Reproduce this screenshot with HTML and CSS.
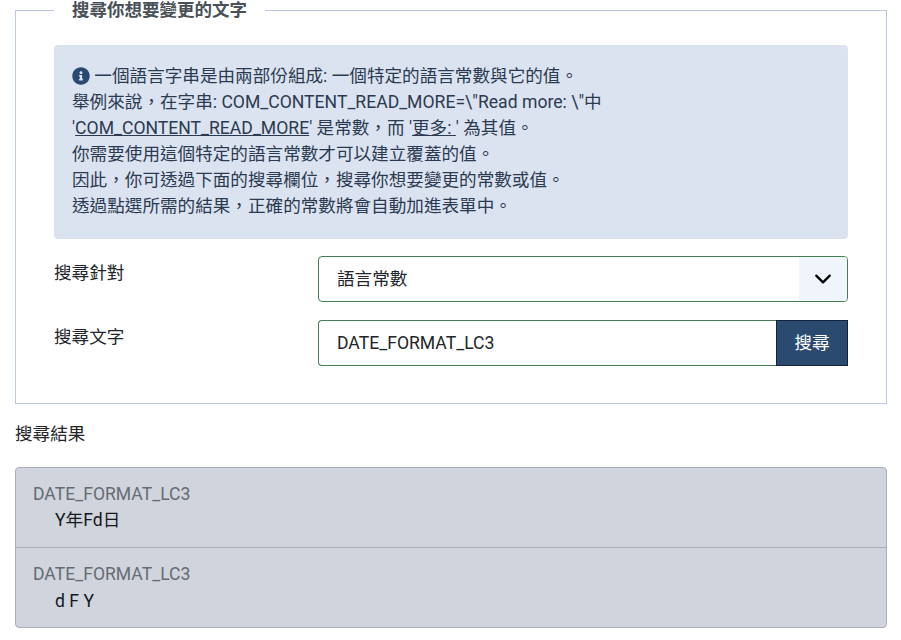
FILE: index.html
```html
<!DOCTYPE html>
<html lang="zh-Hant">
<head>
    <meta charset="UTF-8">
    <title>語言覆蓋</title>

    <link rel="stylesheet" href="styles.css">

</head>
<body>

<fieldset class="search-box">
    <legend>搜尋你想要變更的文字</legend>

    <div class="alert">
        <svg class="info-icon" viewBox="0 0 512 512"><path d="M256 8C119 8 8 119 8 256s111 248 248 248 248-111 248-248S393 8 256 8zm0 110c23 0 42 19 42 42s-19 42-42 42-42-19-42-42 19-42 42-42zm56 254c0 7-5 12-12 12h-88c-7 0-12-5-12-12v-24c0-7 5-12 12-12h12v-64h-12c-7 0-12-5-12-12v-24c0-7 5-12 12-12h64c7 0 12 5 12 12v100h12c7 0 12 5 12 12v24z"/></svg>
        一個語言字串是由兩部份組成: 一個特定的語言常數與它的值。<br>
        舉例來說，在字串: COM_CONTENT_READ_MORE=\"Read more: \"中<br>
        '<u>COM_CONTENT_READ_MORE</u>' 是常數，而 '<u>更多: </u>' 為其值。<br>
        你需要使用這個特定的語言常數才可以建立覆蓋的值。<br>
        因此，你可透過下面的搜尋欄位，搜尋你想要變更的常數或值。<br>
        透過點選所需的結果，正確的常數將會自動加進表單中。
    </div>

    <div class="field">
        <label>搜尋針對</label>
        <div class="select">
            <span class="select-value">語言常數</span>
            <span class="select-arrow">
                <svg width="18" height="18" viewBox="0 0 16 16"><path d="M2 5l6 6 6-6" fill="none" stroke="#000" stroke-width="2" stroke-linecap="round" stroke-linejoin="round"/></svg>
            </span>
        </div>
    </div>

    <div class="field">
        <label>搜尋文字</label>
        <div class="input-group">
            <input type="text" value="DATE_FORMAT_LC3">
            <button type="button">搜尋</button>
        </div>
    </div>
</fieldset>

<div class="results-title">搜尋結果</div>

<ul class="results">
    <li>
        <div class="key">DATE_FORMAT_LC3</div>
        <div class="value">Y年Fd日</div>
    </li>
    <li>
        <div class="key">DATE_FORMAT_LC3</div>
        <div class="value">d F Y</div>
    </li>
</ul>

</body>
</html>
```

FILE: styles.css
```css
* {
    box-sizing: border-box;
    padding: 0;
    margin: 0;
}
body {
    padding: 0 14px 0 15px;
    font-family: Roboto, "Noto Sans CJK TC", sans-serif;
    font-size: 17.6px;
    line-height: 26px;
    color: #22262a;
    background: #fff;
}
.search-box {
    margin-top: -4px;
    height: 408px;
    border: 1px solid #b9c8e2;
    padding: 21px 38px 0;
}
.search-box legend {
    padding: 0 18px;
    margin-left: 0;
    font-size: 17.5px;
    line-height: 28px;
    font-weight: 700;
    color: #495057;
}
.alert {
    height: 194px;
    padding: 18px;
    margin-bottom: 17px;
    background: #dce3f0;
    border-radius: 4px;
    color: #2a3a50;
}
.info-icon {
    width: 18px;
    height: 18px;
    fill: #2a4a70;
    vertical-align: -3px;
}
.field {
    display: flex;
    margin-bottom: 18px;
}
.field label {
    width: 264px;
    flex: none;
    padding-top: 4px;
}
.select {
    flex: 1;
    height: 46px;
    display: flex;
    border: 1px solid #457d54;
    border-radius: 4px;
    overflow: hidden;
}
.select-value {
    flex: 1;
    padding: 9px 18px;
}
.select-arrow {
    width: 48px;
    display: flex;
    align-items: center;
    justify-content: center;
    background: #f0f4fb;
}
.input-group {
    flex: 1;
    height: 46px;
    display: flex;
}
.input-group input {
    flex: 1;
    min-width: 0;
    padding: 0 18px;
    border: 1px solid #457d54;
    border-right: 0;
    border-radius: 4px 0 0 4px;
    outline: none;
    font: inherit;
    color: #22262a;
}
.input-group button {
    width: 72px;
    border: 1px solid #152238;
    background: #2a4a70;
    color: #fff;
    font: inherit;
}
.results-title {
    margin-top: 17px;
    margin-bottom: 20px;
}
.results {
    list-style: none;
    height: 161px;
    background: #d0d4dc;
    border: 1px solid #a9aeb9;
    border-radius: 4px;
}
.results li {
    height: 80.2px;
    padding: 13px 17px 0;
    border-bottom: 1px solid #a9aeb9;
}
.results li:last-child {
    border-bottom: 0;
    height: auto;
}
.results .key {
    line-height: 26.4px;
    color: #666b73;
}
.results .value {
    padding-left: 22px;
    color: #15181c;
}
```
